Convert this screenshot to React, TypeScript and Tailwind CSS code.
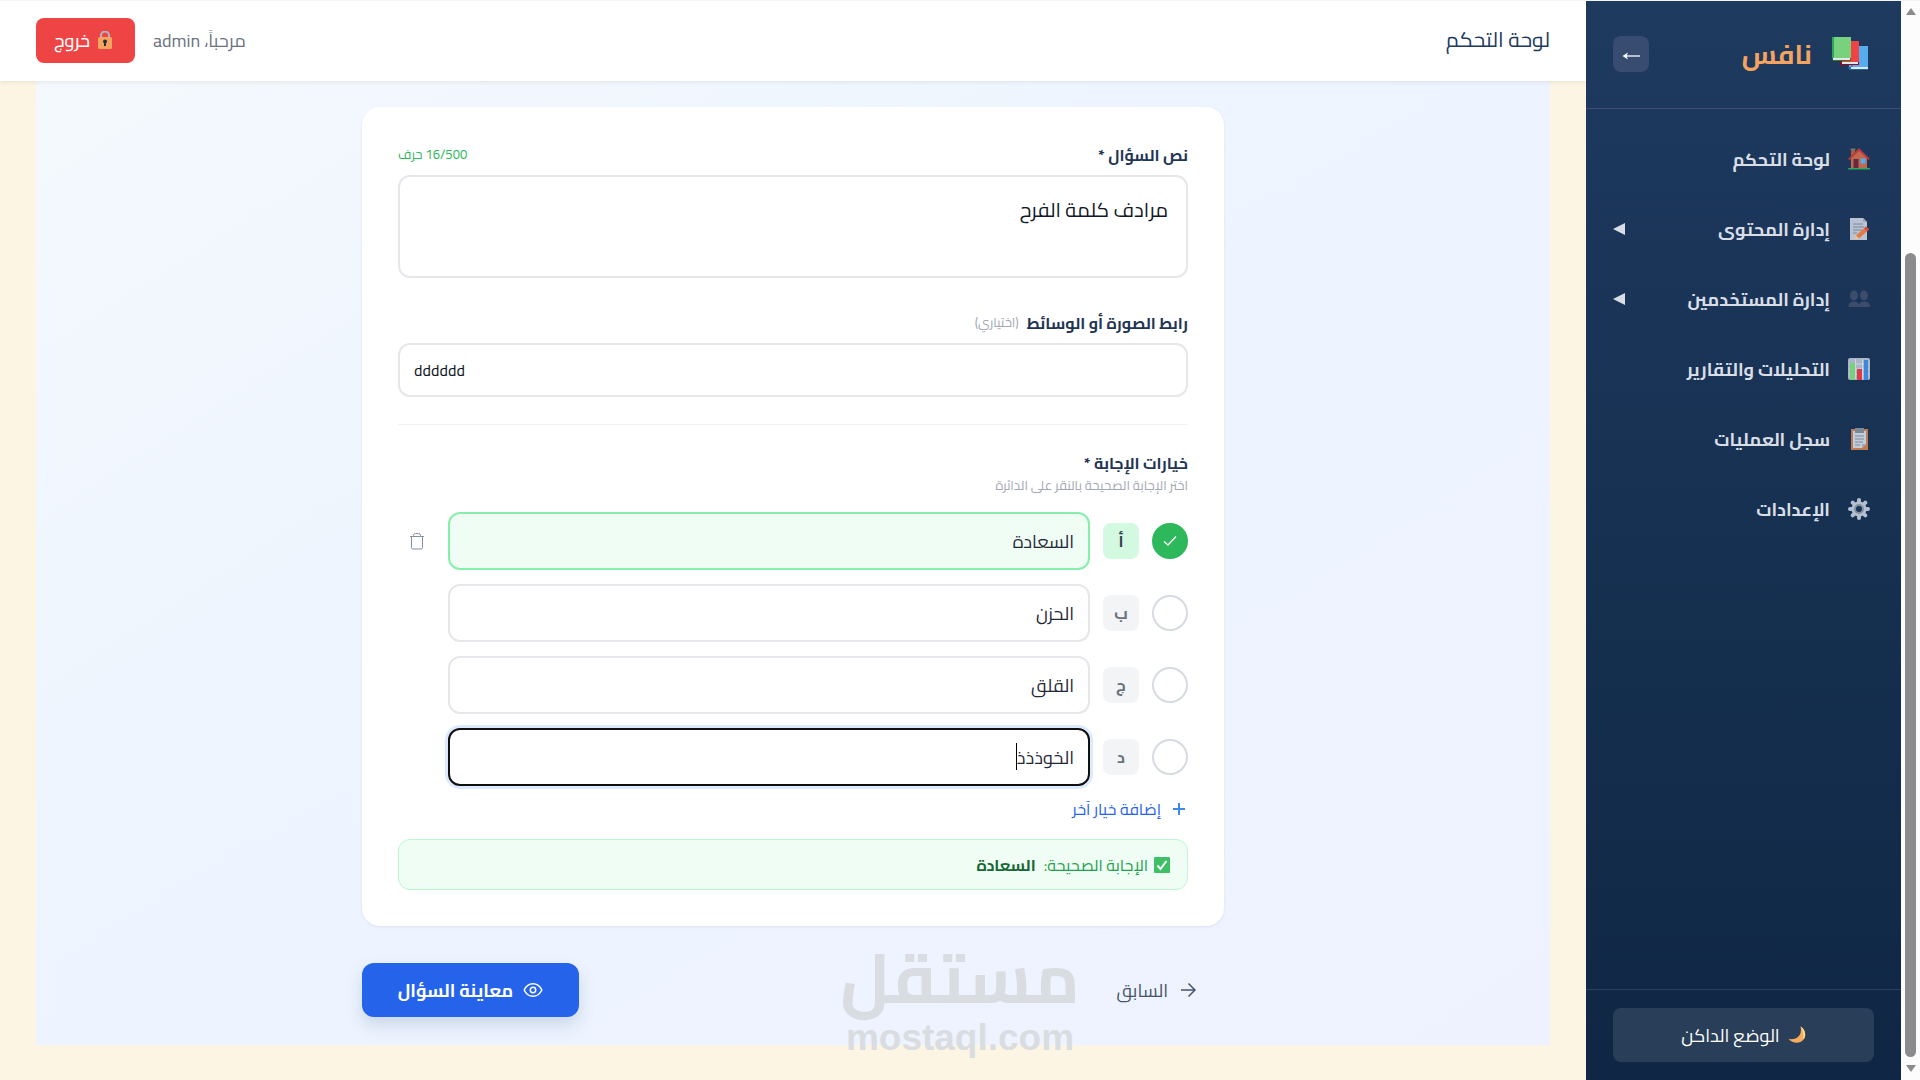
import { ReactNode, useState } from "react";

interface NavItem {
  label: string;
  icon: ReactNode;
  expandable?: boolean;
}

function BooksIcon() {
  return (
    <svg viewBox="0 0 36 34" className="w-9 h-[34px] shrink-0" aria-hidden="true">
      <path d="M17 9h19v22H17z" fill="#55acee" />
      <path d="M19 9h2v21h-2z" fill="#3b88c3" />
      <path d="M16 30h20v3H17z" fill="#226699" />
      <path d="M19 30h17v2H19z" fill="#e1e8ed" />
      <path d="M10 4h17v21H10z" fill="#ef4444" />
      <path d="M8 25h19v3H8z" fill="#a0041e" />
      <path d="M10 25h16v2H10z" fill="#e1e8ed" />
      <path d="M0 0h19v21H0z" fill="#77d17d" />
      <path d="M0 0h2v21H0z" fill="#2fa85a" />
      <path d="M0 21h19v3H1z" fill="#3e721d" />
      <path d="M1 21h17v2H1z" fill="#e1e8ed" />
    </svg>
  );
}

function HouseIcon() {
  return (
    <svg viewBox="0 0 22 22" className="size-[22px] shrink-0" aria-hidden="true">
      <path d="M3 1h4v8H3z" fill="#a85c3c" />
      <path d="M2.500 0.500h5v1.500h-5z" fill="#66757f" />
      <path d="M11 2l8 8v10H3V10z" fill="#c1694f" />
      <path d="M11 0L0 11l1.500 1L11 3l9.500 9 1.500-1z" fill="#bb3a3f" />
      <path d="M5.500 11h5v9h-5z" fill="#662a3c" />
      <path d="M12.500 10.500h5v5h-5z" fill="#55acee" />
      <path d="M0.500 20h21.500v1.500H0z" fill="#2fa85a" />
    </svg>
  );
}

function MemoIcon() {
  return (
    <svg viewBox="0 0 22 22" className="size-[22px] shrink-0" aria-hidden="true">
      <path d="M2 0h13l4 4v18H2z" fill="#b9c3d3" />
      <path d="M15 0l4 4h-4z" fill="#99aab5" />
      <path d="M5 6h10M5 9h11M5 12h9M5 15h4" stroke="#7c8a99" strokeWidth="1" />
      <path d="M18 8.500l3 3-10 9-3-3z" fill="#e07b45" />
      <path d="M18 8.500l3 3-2 2-3-3z" fill="#dd4b3e" />
      <path d="M8 17.500l3 3-5 1z" fill="#f0c088" />
    </svg>
  );
}

function PeopleIcon() {
  return (
    <svg viewBox="0 0 22 22" className="size-[22px] shrink-0" fill="#3c4c6b" aria-hidden="true">
      <ellipse cx="6" cy="7.500" rx="4" ry="5" />
      <ellipse cx="16" cy="7.500" rx="4" ry="5" />
      <path d="M0.500 19c0-4 2.500-5.500 5.500-5.500 2.500 0 4.500 1 5 3 .5-2 2.500-3 5-3 3.500 0 6 1.500 6 5.500z" />
    </svg>
  );
}

function ChartIcon() {
  return (
    <svg viewBox="0 0 22 22" className="size-[22px] shrink-0" aria-hidden="true">
      <rect width="22" height="22" rx="2" fill="#a9b6c8" />
      <path d="M7.500 1v20M14.500 1v20M1 6h20M1 11h20M1 16h20" stroke="#ccd5df" strokeWidth="1" />
      <path d="M2 5h5v17H2z" fill="#77d17d" />
      <path d="M9 11h5v11H9z" fill="#dd3b45" />
      <path d="M16 2h4v20h-4z" fill="#3b88dd" />
    </svg>
  );
}

function ClipboardIcon() {
  return (
    <svg viewBox="0 0 22 22" className="size-[22px] shrink-0" aria-hidden="true">
      <path d="M3 1h17v21H3z" fill="#c1794f" />
      <path d="M5 3h13v13l-4 4H5z" fill="#c3ccda" />
      <path d="M18 16h-4v4z" fill="#99aab5" />
      <path d="M7 0h9v5H7z" fill="#7b8895" />
      <path d="M7 8h9M7 11h9M7 14h8M7 17h5" stroke="#7c8a99" strokeWidth="1" />
    </svg>
  );
}

function GearIcon() {
  return (
    <svg viewBox="0 0 22 22" className="size-[22px] shrink-0" fill="none" aria-hidden="true">
      <g stroke="#b4bfd0" strokeWidth="4" strokeLinecap="round">
        <path d="M11 2v18M2 11h18M4.700 4.700l12.600 12.600M17.300 4.700L4.700 17.300" />
      </g>
      <circle cx="11" cy="11" r="7.500" fill="#b4bfd0" />
      <circle cx="11" cy="11" r="5" fill="#8492a0" />
      <circle cx="11" cy="11" r="3" fill="#193558" />
    </svg>
  );
}

function MoonIcon() {
  return (
    <svg viewBox="0 0 18 18" className="size-[18px] shrink-0" aria-hidden="true">
      <path d="M12.500.5c5 3 6 9 3 13-3.500 4.500-11 4.500-15-.8C6 14.500 15 11 12.500.5z" fill="#f4ac5f" />
      <path d="M12.500.5c5 3 6 9 3 13-.5-2 .5-8-3-13z" fill="#ffd983" />
    </svg>
  );
}

function LockIcon() {
  return (
    <svg viewBox="0 0 14 18" className="w-3.5 h-[18px] shrink-0" aria-hidden="true">
      <path d="M3 8V4.500a4 4 0 018 0V8" fill="none" stroke="#aab8c2" strokeWidth="2" />
      <rect y="6" width="14" height="12" rx="1.500" fill="#f4a460" />
      <circle cx="7" cy="10.500" r="2" fill="#292f33" />
      <path d="M6 11h2v4H6z" fill="#292f33" />
    </svg>
  );
}

function EyeIcon() {
  return (
    <svg viewBox="0 0 20 16" className="w-5 h-4 shrink-0" fill="none" stroke="currentColor" strokeWidth="1.500" aria-hidden="true">
      <path d="M1.200 8C3 4 6 1.700 10 1.700S17 4 18.800 8C17 12 14 14.300 10 14.300S3 12 1.200 8z" />
      <circle cx="10" cy="8" r="2.700" />
    </svg>
  );
}

function TrashIcon() {
  return (
    <svg viewBox="0 0 16 18" className="w-4 h-[18px]" fill="none" stroke="#8490a5" strokeWidth="1" aria-hidden="true">
      <path d="M1 4.500h14M4.500 4.500V3.500a2 2 0 012-2h3a2 2 0 012 2v1M2.500 4.500v11a1.500 1.500 0 001.500 1.500h8a1.500 1.500 0 001.500-1.500v-11" />
    </svg>
  );
}

const navItems: NavItem[] = [
  { label: "لوحة التحكم", icon: <HouseIcon /> },
  { label: "إدارة المحتوى", icon: <MemoIcon />, expandable: true },
  { label: "إدارة المستخدمين", icon: <PeopleIcon />, expandable: true },
  { label: "التحليلات والتقارير", icon: <ChartIcon /> },
  { label: "سجل العمليات", icon: <ClipboardIcon /> },
  { label: "الإعدادات", icon: <GearIcon /> },
];

const letters = ["أ", "ب", "ج", "د"];

function Sidebar() {
  return (
    <aside className="w-[315px] shrink-0 flex flex-col bg-gradient-to-b from-[#1e3a5f] to-[#0f2744]">
      <div className="h-[108px] shrink-0 flex items-center justify-between pr-[33px] pl-[27px] pb-0.5 border-b border-[#3d4f74]">
        <div className="flex items-center gap-5">
          <BooksIcon />
          <span className="text-[27px] leading-9 font-bold text-[#f4a460]">نافس</span>
        </div>
        <button
          type="button"
          aria-label="طي القائمة"
          className="size-9 rounded-lg bg-[#384b70] text-white flex items-center justify-center"
        >
          <svg viewBox="0 0 18 10" className="w-[18px] h-2.5 mt-1" fill="none" stroke="currentColor" strokeWidth="1.300" aria-hidden="true">
            <path d="M18 5H2" />
            <path d="M6 1.500L0.500 5 6 8.500 4.500 5z" fill="currentColor" stroke="none" />
          </svg>
        </button>
      </div>

      <nav className="flex-1 flex flex-col gap-1.5 pt-[18px]">
        {navItems.map((item) => (
          <a
            key={item.label}
            href="#"
            className="h-16 flex items-center gap-[18px] pr-[31px] pl-[27px] text-[18px] font-bold text-[#d9dee6]"
          >
            {item.icon}
            <span>{item.label}</span>
            {item.expandable && (
              <svg viewBox="0 0 12 12" className="size-3 mr-auto" fill="currentColor" aria-hidden="true">
                <path d="M12 0v12L0 6z" />
              </svg>
            )}
          </a>
        ))}
      </nav>

      <div className="border-t border-[#2a4162] px-[27px] py-[18px]">
        <button
          type="button"
          className="w-full h-[54px] rounded-lg bg-[#293e58] text-white text-[18px] flex items-center justify-center gap-2"
        >
          <MoonIcon />
          الوضع الداكن
        </button>
      </div>
    </aside>
  );
}

function Header() {
  return (
    <header className="relative h-20 shrink-0 flex items-center justify-between px-9 pb-0.5 bg-white shadow-[0_2px_4px_rgba(0,0,0,0.06)]">
      <h1 className="text-[21px] leading-7 text-[#1e3a5f]">لوحة التحكم</h1>
      <div className="flex items-center gap-[18px]">
        <span className="text-[18px] text-[#6b7280]">مرحباً، admin</span>
        <button
          type="button"
          className="h-[45px] rounded-lg bg-[#ef4444] pr-[23px] pl-[18px] text-white text-[18px] font-medium flex items-center gap-2"
        >
          <LockIcon />
          خروج
        </button>
      </div>
    </header>
  );
}

interface AnswerRowProps {
  index: number;
  value: string;
  selected: boolean;
  active: boolean;
  onSelect: () => void;
  onChange: (value: string) => void;
}

function AnswerRow({ index, value, selected, active, onSelect, onChange }: AnswerRowProps) {
  const id = `answer-${index}`;
  const state = selected
    ? "border-[#86efac] bg-[#f0fdf4]"
    : active
      ? "border-[#101010] bg-white ring-3 ring-[#dbeafe]"
      : "border-[#e5e7eb] bg-white";

  return (
    <div className="flex items-center gap-[13px]">
      <span className="relative size-9 shrink-0">
        <input
          type="radio"
          name="correct"
          aria-label={`الإجابة ${letters[index]}`}
          checked={selected}
          onChange={onSelect}
          className="block size-9 appearance-none rounded-full border-2 border-[#d6dae2] checked:border-[#2eb85c] checked:bg-[#2eb85c]"
        />
        {selected && (
          <svg viewBox="0 0 36 36" className="absolute inset-0 pointer-events-none" fill="none" stroke="white" strokeWidth="1.300" aria-hidden="true">
            <path d="M12 18.500l4 3.500 8-8.500" />
          </svg>
        )}
      </span>
      <label
        htmlFor={id}
        className={`size-9 shrink-0 rounded-lg flex items-center justify-center text-[16px] font-bold ${
          selected ? "bg-[#d3f9e0] text-[#374151]" : "bg-[#f3f4f6] text-[#6b7280]"
        }`}
      >
        {letters[index]}
      </label>
      <div className="relative flex-1">
        <input
          id={id}
          type="text"
          value={value}
          onChange={(e) => onChange(e.target.value)}
          className={`block w-full h-[58px] rounded-xl border-2 px-3.5 text-[18px] text-[#1f2937] outline-none ${state}`}
        />
        {active && <span className="absolute top-[15px] right-[73px] w-px h-[27px] bg-black" />}
      </div>
      <div className="w-[37px] shrink-0 flex justify-center">
        {selected && (
          <button type="button" aria-label="حذف الخيار">
            <TrashIcon />
          </button>
        )}
      </div>
    </div>
  );
}

function QuestionForm() {
  const [question, setQuestion] = useState("مرادف كلمة الفرح");
  const [media, setMedia] = useState("dddddd");
  const [answers, setAnswers] = useState(["السعادة", "الحزن", "القلق", "الخوذذذ"]);
  const [correct, setCorrect] = useState(0);

  const updateAnswer = (index: number, value: string) =>
    setAnswers(answers.map((answer, i) => (i === index ? value : answer)));

  return (
    <form className="w-full max-w-[862px] mx-auto">
      <div className="rounded-[18px] bg-white p-9 shadow-[0_1px_3px_rgba(0,0,0,0.08)]">
        <div className="h-6 flex items-center justify-between">
          <label htmlFor="question" className="text-[16px] leading-[22px] font-bold text-[#1f3554]">
            نص السؤال *
          </label>
          <span className="text-[13px] text-[#2eb85c]">{`${question.length}/500 حرف`}</span>
        </div>
        <textarea
          id="question"
          value={question}
          onChange={(e) => setQuestion(e.target.value)}
          className="mt-2 block w-full h-[103px] resize-none rounded-xl border-2 border-[#e5e7eb] px-[18px] py-[18px] text-[20px] leading-[30px] text-[#111827] outline-none"
        />

        <div className="mt-[33px] h-6 flex items-center gap-2">
          <label htmlFor="media" className="text-[16px] leading-[22px] font-bold text-[#1f3554]">
            رابط الصورة أو الوسائط
          </label>
          <span className="text-[13px] text-[#a3a8b2]">(اختياري)</span>
        </div>
        <input
          id="media"
          type="text"
          dir="ltr"
          value={media}
          onChange={(e) => setMedia(e.target.value)}
          className="mt-2 block w-full h-[54px] rounded-xl border-2 border-[#e5e7eb] px-3.5 text-[16px] text-[#111827] outline-none"
        />

        <fieldset className="mt-[27px] border-t border-[#f0f2f4] pt-[26px]">
          <h2 className="text-[16px] leading-6 font-bold text-[#1f3554]">خيارات الإجابة *</h2>
          <p className="text-[13px] leading-5 text-[#a3a8b2]">اختر الإجابة الصحيحة بالنقر على الدائرة</p>
          <div className="mt-[17px] flex flex-col gap-3.5">
            {answers.map((answer, i) => (
              <AnswerRow
                key={letters[i]}
                index={i}
                value={answer}
                selected={i === correct}
                active={i === 3}
                onSelect={() => setCorrect(i)}
                onChange={(value) => updateAnswer(i, value)}
              />
            ))}
          </div>
        </fieldset>

        <button type="button" className="mt-[11px] h-6 pr-[3px] flex items-center gap-3 text-[16px] text-[#2563eb]">
          <svg viewBox="0 0 12 12" className="size-3" fill="none" stroke="#3b8ae6" strokeWidth="2" aria-hidden="true">
            <path d="M6 0v12M0 6h12" />
          </svg>
          إضافة خيار آخر
        </button>

        <div className="mt-[18px] h-[51px] rounded-xl border border-[#bbf7d0] bg-[#f0fdf4] px-[17px] flex items-center gap-1.5 text-[16px] leading-[22px] text-[#22a04f]">
          <svg viewBox="0 0 16 16" className="size-4" aria-hidden="true">
            <rect width="16" height="16" rx="1" fill="#3fbf66" />
            <path d="M3.500 8.500L6.500 12l6-8" fill="none" stroke="white" strokeWidth="2" />
          </svg>
          <span>الإجابة الصحيحة:</span>
          <strong className="mr-0.5 font-bold text-[#166534]">{answers[correct]}</strong>
        </div>
      </div>

      <div className="mt-[37px] flex items-center justify-between">
        <button type="button" className="h-[54px] px-7 flex items-center gap-3 text-[18px] text-[#475569]">
          <svg viewBox="0 0 16 16" className="size-4" fill="none" stroke="currentColor" strokeWidth="1.500" aria-hidden="true">
            <path d="M1 8h14M8.500 1.500L15 8l-6.500 6.500" />
          </svg>
          السابق
        </button>
        <button
          type="button"
          className="w-[217px] h-[54px] rounded-xl bg-[#2563eb] text-white text-[18px] font-bold flex items-center justify-center gap-2.5 shadow-[0_8px_16px_rgba(100,130,160,0.25)]"
        >
          <EyeIcon />
          معاينة السؤال
        </button>
      </div>
    </form>
  );
}

function ScrollTrack() {
  return (
    <div className="w-[19px] shrink-0 flex flex-col items-center bg-[#fcfcfc] pt-[7px] pb-2" aria-hidden="true">
      <svg viewBox="0 0 10 7" className="w-2.5 h-[7px]" fill="#8b8b8d">
        <path d="M5 0l5 7H0z" />
      </svg>
      <div className="flex-[238]" />
      <div className="w-[11px] flex-[804] rounded-full bg-[#8b8b8d]" />
      <div className="h-2" />
      <svg viewBox="0 0 10 7" className="w-2.5 h-[7px]" fill="#8b8b8d">
        <path d="M5 7l5-7H0z" />
      </svg>
    </div>
  );
}

export default function App() {
  return (
    <div
      dir="rtl"
      className="relative h-screen flex overflow-hidden border-t border-[#f3f4f6] bg-[#fdf5e3] font-[Cairo,Roboto,'DejaVu_Sans',sans-serif]"
    >
      <ScrollTrack />
      <Sidebar />
      <div className="flex-1 min-w-0 flex flex-col">
        <Header />
        <main className="px-9">
          <div className="pt-[26px] pb-7 bg-gradient-to-br from-[#f4f9fd] via-[#edf4ff] to-[#eef2ff]">
            <QuestionForm />
          </div>
        </main>
      </div>
      <div className="absolute bottom-6 left-1/2 -translate-x-1/2 flex flex-col items-center gap-2 text-[#d9dde1] font-bold pointer-events-none">
        <span className="text-[70px] leading-[68px]">مستقل</span>
        <span className="text-[37px] leading-9 font-['Liberation_Sans',sans-serif]" dir="ltr">mostaql.com</span>
      </div>
    </div>
  );
}
